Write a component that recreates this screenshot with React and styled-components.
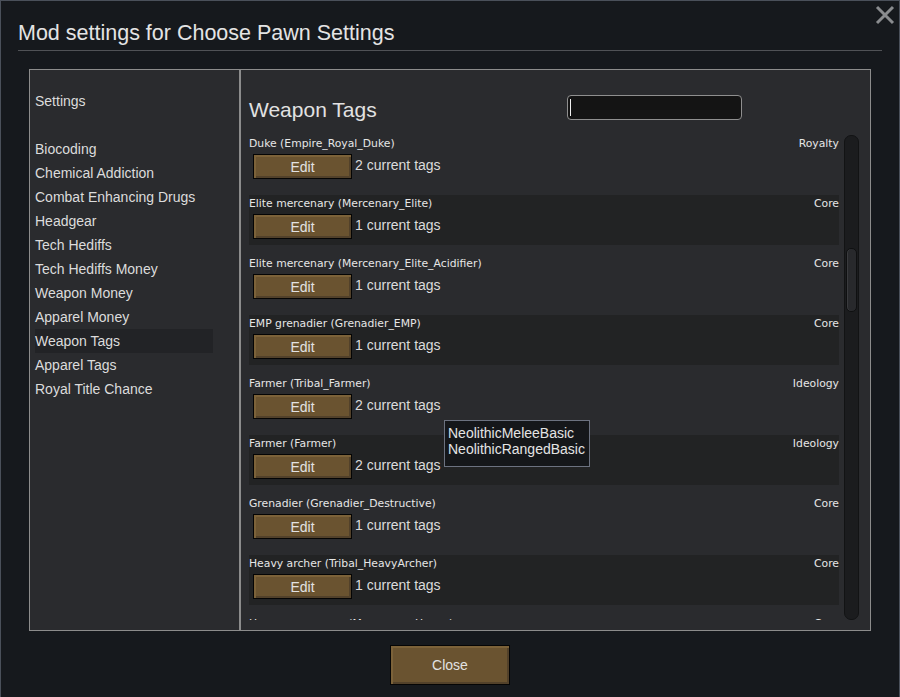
import React from 'react';
import styled, { createGlobalStyle } from 'styled-components';

const GlobalStyle = createGlobalStyle`
  html, body {
    margin: 0;
    padding: 0;
    background: #16191d;
  }
  * { box-sizing: border-box; }
`;

const SANS = '"Liberation Sans", Arial, sans-serif';
const SMALL = '"DejaVu Sans", "Liberation Sans", sans-serif';

const settings = [
    'Biocoding',
    'Chemical Addiction',
    'Combat Enhancing Drugs',
    'Headgear',
    'Tech Hediffs',
    'Tech Hediffs Money',
    'Weapon Money',
    'Apparel Money',
    'Weapon Tags',
    'Apparel Tags',
    'Royal Title Chance',
];

const rows = [
    { name: 'Duke (Empire_Royal_Duke)', source: 'Royalty', count: 2 },
    { name: 'Elite mercenary (Mercenary_Elite)', source: 'Core', count: 1 },
    { name: 'Elite mercenary (Mercenary_Elite_Acidifier)', source: 'Core', count: 1 },
    { name: 'EMP grenadier (Grenadier_EMP)', source: 'Core', count: 1 },
    { name: 'Farmer (Tribal_Farmer)', source: 'Ideology', count: 2 },
    { name: 'Farmer (Farmer)', source: 'Ideology', count: 2 },
    { name: 'Grenadier (Grenadier_Destructive)', source: 'Core', count: 1 },
    { name: 'Heavy archer (Tribal_HeavyArcher)', source: 'Core', count: 1 },
    { name: 'Heavy mercenary (Mercenary_Heavy)', source: 'Core', count: 1 },
];

const Window = styled.div`
  position: relative;
  width: 900px;
  height: 697px;
  background: #16191d;
  border: 1px solid #4a505a;
  border-bottom: none;
  display: flex;
  flex-direction: column;
  padding: 0 17px;
  font-family: ${SANS};
  color: #dedede;
`;

const Title = styled.h1`
  margin: 20px 0 0 0;
  font-size: 21.5px;
  font-weight: normal;
  line-height: 25px;
  color: #e4e4e4;
`;

const Rule = styled.div`
  height: 1px;
  margin-top: 4px;
  width: 864px;
  background: #505256;
`;

const CloseX = styled.button`
  position: absolute;
  top: 3px;
  right: 3px;
  width: 22px;
  height: 22px;
  padding: 0;
  border: none;
  background: none;
  display: flex;
  align-items: center;
  justify-content: center;
`;

const Body = styled.div`
  display: flex;
  margin: 18px 0 0 11px;
  height: 562px;
`;

const Box = styled.div`
  border: 1px solid #8c8c8c;
  background: #2a2b2e;
  width: ${p => p.$w}px;
  height: 100%;
`;

const SideList = styled(Box)`
  padding: 19px 0 0 5px;
`;

const SideItem = styled.div`
  width: 178px;
  height: 24px;
  line-height: 24px;
  font-size: 14px;
  color: #dcdcdc;
  white-space: nowrap;
  background: ${p => (p.$active ? '#222326' : 'transparent')};
  margin-bottom: ${p => (p.$gap ? 24 : 0)}px;
`;

const Content = styled(Box)`
  padding-left: 8px;
  display: flex;
  flex-direction: column;
`;

const Header = styled.div`
  height: 65px;
  display: flex;
  align-items: flex-start;
  padding-top: 25px;
`;

const Heading = styled.h2`
  margin: 3px 0 0 0;
  width: 318px;
  font-size: 21px;
  font-weight: normal;
  line-height: 24px;
  color: #e2e2e2;
`;

const Search = styled.div`
  width: 175px;
  height: 25px;
  background: #141414;
  border: 1px solid #8f8f8f;
  border-radius: 4px;
  padding: 3px 0 0 2px;
`;

const Caret = styled.div`
  width: 1px;
  height: 17px;
  background: #f0f0f0;
`;

const ListArea = styled.div`
  display: flex;
  gap: 5px;
  height: 485px;
`;

const List = styled.div`
  width: 590px;
  overflow: hidden;
`;

const Row = styled.div`
  height: 50px;
  margin-bottom: 10px;
  background: ${p => (p.$dark ? '#222324' : 'transparent')};
`;

const RowTop = styled.div`
  display: flex;
  justify-content: space-between;
  height: 15px;
  padding-top: 2px;
  font-family: ${SMALL};
  font-size: 10.8px;
  line-height: 13px;
  color: #e6e6e6;
`;

const RowControls = styled.div`
  display: flex;
  align-items: center;
  margin-top: 4px;
  padding-left: 4px;
  gap: 3px;
  font-size: 14px;
`;

const BrownButton = styled.button`
  width: ${p => p.$w}px;
  height: ${p => p.$h}px;
  padding: 0;
  border: 1px solid #050505;
  background: #6a5330;
  box-shadow: inset 2px 2px 0 #7c6239, inset -2px -2px 0 #52412a;
  color: #e2e2e2;
  font-family: ${SANS};
  font-size: ${p => p.$fs}px;
  line-height: 1;
`;

const Count = styled.span`
  color: #dcdcdc;
  white-space: nowrap;
  padding-bottom: 4px;
`;

const Track = styled.div`
  width: 15px;
  height: 485px;
  border-radius: 7px;
  background: #1b1c1e;
  border: 1px solid #121314;
  padding: 112px 1px 0 1px;
`;

const Thumb = styled.div`
  height: 64px;
  border-radius: 5px;
  background: #28292c;
  border: 1px solid #0f1011;
  box-shadow: inset 1px 0 0 #3a3b3e;
`;

const Footer = styled.div`
  display: flex;
  justify-content: center;
  margin-top: 14px;
`;

const Tooltip = styled.div`
  position: absolute;
  left: 443px;
  top: 419px;
  width: 146px;
  height: 47px;
  background: #15171a;
  border: 1px solid #6c7280;
  padding: 4px 0 0 3px;
  font-size: 14px;
  line-height: 16px;
  color: #e4e4e4;
  white-space: nowrap;
`;

export default function App() {
    return (
        <Window>
            <GlobalStyle />
            <Title>Mod settings for Choose Pawn Settings</Title>
            <Rule />
            <CloseX aria-label="close">
                <svg width="20" height="20" viewBox="0 0 20 20">
                    <path d="M2 2 L18 18 M18 2 L2 18" stroke="#8a8c8f" strokeWidth="3" />
                </svg>
            </CloseX>
            <Body>
                <SideList $w={211}>
                    <SideItem $gap>Settings</SideItem>
                    {settings.map(s => (
                        <SideItem key={s} $active={s === 'Weapon Tags'}>{s}</SideItem>
                    ))}
                </SideList>
                <Content $w={631}>
                    <Header>
                        <Heading>Weapon Tags</Heading>
                        <Search><Caret /></Search>
                    </Header>
                    <ListArea>
                        <List>
                            {rows.map((r, i) => (
                                <Row key={r.name} $dark={i % 2 === 1}>
                                    <RowTop>
                                        <span>{r.name}</span>
                                        <span>{r.source}</span>
                                    </RowTop>
                                    <RowControls>
                                        <BrownButton $w={99} $h={25} $fs={14}>Edit</BrownButton>
                                        <Count>{r.count} current tags</Count>
                                    </RowControls>
                                </Row>
                            ))}
                        </List>
                        <Track><Thumb /></Track>
                    </ListArea>
                </Content>
            </Body>
            <Footer>
                <BrownButton $w={120} $h={40} $fs={14}>Close</BrownButton>
            </Footer>
            <Tooltip>
                NeolithicMeleeBasic<br />NeolithicRangedBasic
            </Tooltip>
        </Window>
    );
}
